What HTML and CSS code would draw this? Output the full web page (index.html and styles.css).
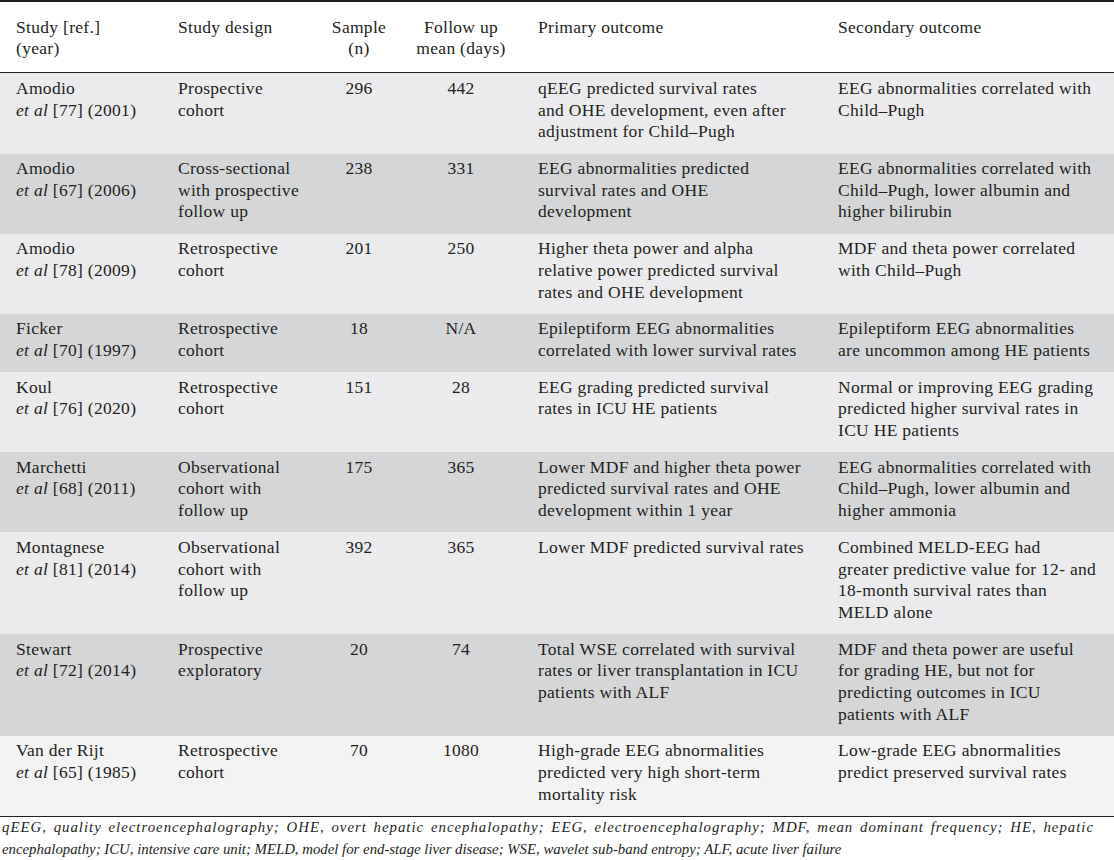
FILE: index.html
```html
<!DOCTYPE html>
<html lang="en">
<head>
    <meta charset="UTF-8">
    <meta name="viewport" content="width=device-width, initial-scale=1.0">
    <title>EEG and survival in hepatic encephalopathy</title>
    <link rel="stylesheet" href="styles.css">
</head>
<body>
    <table class="study-table">
        <colgroup>
            <col class="col-study">
            <col class="col-design">
            <col class="col-sample">
            <col class="col-follow">
            <col class="col-primary">
            <col class="col-secondary">
        </colgroup>
        <thead>
            <tr>
                <th class="study">Study [ref.]<br>(year)</th>
                <th class="design">Study design</th>
                <th class="num">Sample<br>(n)</th>
                <th class="num">Follow up<br>mean (days)</th>
                <th class="primary">Primary outcome</th>
                <th class="secondary">Secondary outcome</th>
            </tr>
        </thead>
        <tbody>
            <tr class="light">
                <td class="study">Amodio<br><i>et al</i> [77] (2001)</td>
                <td class="design">Prospective<br>cohort</td>
                <td class="num">296</td>
                <td class="num">442</td>
                <td class="primary">qEEG predicted survival rates<br>and OHE development, even after<br>adjustment for Child–Pugh</td>
                <td class="secondary">EEG abnormalities correlated with<br>Child–Pugh</td>
            </tr>
            <tr class="dark">
                <td class="study">Amodio<br><i>et al</i> [67] (2006)</td>
                <td class="design">Cross-sectional<br>with prospective<br>follow up</td>
                <td class="num">238</td>
                <td class="num">331</td>
                <td class="primary">EEG abnormalities predicted<br>survival rates and OHE<br>development</td>
                <td class="secondary">EEG abnormalities correlated with<br>Child–Pugh, lower albumin and<br>higher bilirubin</td>
            </tr>
            <tr class="light">
                <td class="study">Amodio<br><i>et al</i> [78] (2009)</td>
                <td class="design">Retrospective<br>cohort</td>
                <td class="num">201</td>
                <td class="num">250</td>
                <td class="primary">Higher theta power and alpha<br>relative power predicted survival<br>rates and OHE development</td>
                <td class="secondary">MDF and theta power correlated<br>with Child–Pugh</td>
            </tr>
            <tr class="dark">
                <td class="study">Ficker<br><i>et al</i> [70] (1997)</td>
                <td class="design">Retrospective<br>cohort</td>
                <td class="num">18</td>
                <td class="num">N/A</td>
                <td class="primary">Epileptiform EEG abnormalities<br>correlated with lower survival rates</td>
                <td class="secondary">Epileptiform EEG abnormalities<br>are uncommon among HE patients</td>
            </tr>
            <tr class="light">
                <td class="study">Koul<br><i>et al</i> [76] (2020)</td>
                <td class="design">Retrospective<br>cohort</td>
                <td class="num">151</td>
                <td class="num">28</td>
                <td class="primary">EEG grading predicted survival<br>rates in ICU HE patients</td>
                <td class="secondary">Normal or improving EEG grading<br>predicted higher survival rates in<br>ICU HE patients</td>
            </tr>
            <tr class="dark">
                <td class="study">Marchetti<br><i>et al</i> [68] (2011)</td>
                <td class="design">Observational<br>cohort with<br>follow up</td>
                <td class="num">175</td>
                <td class="num">365</td>
                <td class="primary">Lower MDF and higher theta power<br>predicted survival rates and OHE<br>development within 1 year</td>
                <td class="secondary">EEG abnormalities correlated with<br>Child–Pugh, lower albumin and<br>higher ammonia</td>
            </tr>
            <tr class="light">
                <td class="study">Montagnese<br><i>et al</i> [81] (2014)</td>
                <td class="design">Observational<br>cohort with<br>follow up</td>
                <td class="num">392</td>
                <td class="num">365</td>
                <td class="primary">Lower MDF predicted survival rates</td>
                <td class="secondary">Combined MELD-EEG had<br>greater predictive value for 12- and<br>18-month survival rates than<br>MELD alone</td>
            </tr>
            <tr class="dark">
                <td class="study">Stewart<br><i>et al</i> [72] (2014)</td>
                <td class="design">Prospective<br>exploratory</td>
                <td class="num">20</td>
                <td class="num">74</td>
                <td class="primary">Total WSE correlated with survival<br>rates or liver transplantation in ICU<br>patients with ALF</td>
                <td class="secondary">MDF and theta power are useful<br>for grading HE, but not for<br>predicting outcomes in ICU<br>patients with ALF</td>
            </tr>
            <tr class="last">
                <td class="study">Van der Rijt<br><i>et al</i> [65] (1985)</td>
                <td class="design">Retrospective<br>cohort</td>
                <td class="num">70</td>
                <td class="num">1080</td>
                <td class="primary">High-grade EEG abnormalities<br>predicted very high short-term<br>mortality risk</td>
                <td class="secondary">Low-grade EEG abnormalities<br>predict preserved survival rates</td>
            </tr>
        </tbody>
    </table>
    <div class="table-note">
        <span class="note-line full">qEEG, quality electroencephalography; OHE, overt hepatic encephalopathy; EEG, electroencephalography; MDF, mean dominant frequency; HE, hepatic</span>
        <span class="note-line">encephalopathy; ICU, intensive care unit; MELD, model for end-stage liver disease; WSE, wavelet sub-band entropy; ALF, acute liver failure</span>
    </div>
</body>
</html>
```

FILE: styles.css
```css
* {
    margin: 0;
    padding: 0;
    box-sizing: border-box;
}

body {
    font-family: 'Liberation Serif', 'DejaVu Serif', serif;
    color: #231f20;
    background: #ffffff;
    width: 1114px;
}

.study-table {
    width: 1114px;
    table-layout: fixed;
    border-collapse: collapse;
    border-top: 2px solid #231f20;
    border-bottom: 1px solid #231f20;
    font-size: 17.5px;
    line-height: 21.7px;
    letter-spacing: 0.3px;
}

.col-study { width: 162px; }
.col-design { width: 148px; }
.col-sample { width: 98px; }
.col-follow { width: 106px; }
.col-primary { width: 308px; }
.col-secondary { width: 292px; }

th,
td {
    vertical-align: top;
    text-align: left;
    white-space: nowrap;
    font-weight: normal;
}

th {
    padding-top: 14.5px;
    padding-bottom: 12.5px;
    border-bottom: 1px solid #231f20;
}

td {
    padding-top: 4.5px;
    padding-bottom: 10.5px;
}

.study { padding-left: 16px; }
.design { padding-left: 16px; }
.primary { padding-left: 24px; }
.secondary { padding-left: 16px; }

.num {
    text-align: center;
}

.light { background: #ebebed; }
.dark { background: #d5d6d8; }
.last { background: #f3f3f4; }

.table-note {
    width: 1092px;
    margin-left: 2px;
    font-style: italic;
    font-size: 14.8px;
    line-height: 21.5px;
}

.note-line {
    display: block;
    white-space: nowrap;
}

/* first line is set full measure, spread mostly through the letters */
.note-line.full {
    white-space: normal;
    letter-spacing: 1px;
    text-align: justify;
    text-align-last: justify;
}
```
